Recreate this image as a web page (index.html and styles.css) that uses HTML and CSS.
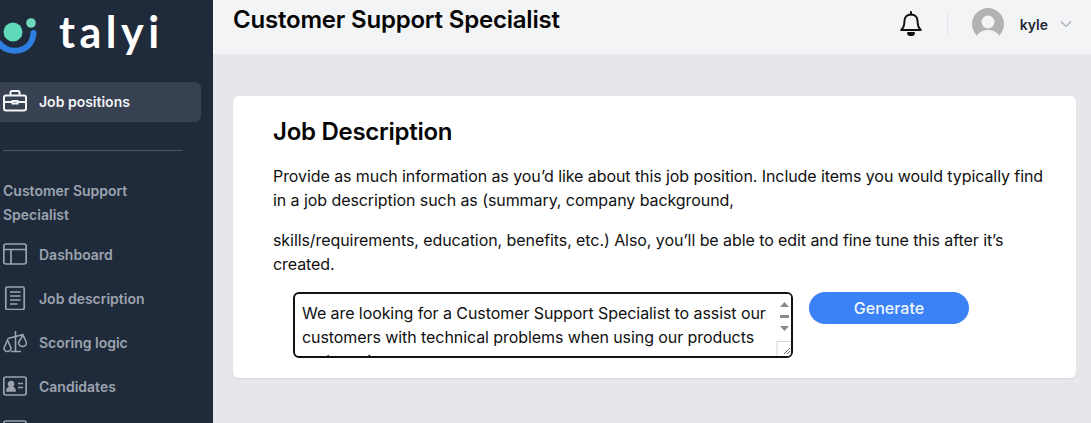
FILE: index.html
```html
<!DOCTYPE html>
<html lang="en">
<head>
<meta charset="utf-8">
<title>Job Description</title>
<link rel="stylesheet" href="styles.css">
</head>
<body>
<div class="app">
  <aside class="sidebar">
    <div class="brand">
      <svg class="logo" width="40" height="52" viewBox="0 0 40 52" fill="none">
        <circle cx="13" cy="27" r="9.500" fill="#5fd9b8"/>
        <circle cx="31" cy="18" r="4.800" fill="#6fd8bd"/>
        <path d="M-1 38C7 50 32 49 33.500 28" stroke="#2f7fe3" stroke-width="6" stroke-linecap="round"/>
      </svg>
      <span class="wordmark">talyi</span>
    </div>
    <a class="nav-item active">
      <svg class="nav-icon" viewBox="0 0 24 24" fill="none" stroke="currentColor" stroke-width="2"><rect x="1" y="6.500" width="22" height="15" rx="2"/><path d="M7.500 6.500V3.500a1.500 1.500 0 0 1 1.500-1.500h6a1.500 1.500 0 0 1 1.500 1.500v3M1 13h8.500M14.500 13H23M9.500 12h5v2.500h-5z"/></svg>
      <span>Job positions</span>
    </a>
    <hr class="divider">
    <div class="section-title">Customer Support Specialist</div>
    <nav class="nav">
      <a class="nav-item">
        <svg class="nav-icon" viewBox="0 0 24 24" fill="none" stroke="currentColor" stroke-width="1.700"><rect x="0.800" y="2" width="22.400" height="20" rx="2"/><path d="M1 7.500h22M8 7.500v14.500"/></svg>
        <span>Dashboard</span>
      </a>
      <a class="nav-item">
        <svg class="nav-icon" viewBox="0 0 24 24" fill="none" stroke="currentColor" stroke-width="1.700"><rect x="2.800" y="1" width="18.400" height="22.500" rx="1.500"/><path d="M7 6h10.500M7 10h10.500M7 14h10.500M7 18h7.500"/></svg>
        <span>Job description</span>
      </a>
      <a class="nav-item">
        <svg class="nav-icon" viewBox="0 0 24 24" fill="none" stroke="currentColor" stroke-width="1.600"><path d="M12.500 1v20M8 21.500h10M5 8.500 20 4.500M1 18l3.500-8 3.500 8a3.500 3.500 0 0 1-7 0zM15.500 12.500l4.500-7.500 3.500 7.500a4 4 0 0 1-8 0z"/></svg>
        <span>Scoring logic</span>
      </a>
      <a class="nav-item">
        <svg class="nav-icon" viewBox="0 0 24 24" fill="none" stroke="currentColor" stroke-width="1.700"><rect x="0.800" y="3" width="22.400" height="18" rx="2"/><circle cx="8" cy="10" r="2.500" fill="currentColor"/><path d="M4 17c0-5 8-5 8 0z" fill="currentColor"/><path d="M15 9.500h5M15 13.500h5"/></svg>
        <span>Candidates</span>
      </a>
      <a class="nav-item">
        <svg class="nav-icon" viewBox="0 0 24 24" fill="none" stroke="currentColor" stroke-width="1.700"><rect x="0.800" y="3" width="22.400" height="18" rx="2"/></svg>
      </a>
    </nav>
  </aside>
  <div class="content">
    <header class="topbar">
      <h1 class="page-title">Customer Support Specialist</h1>
      <div class="top-actions">
        <svg class="bell" width="24" height="26" viewBox="0 0 24 26" fill="none" stroke="#111" stroke-width="2" stroke-linejoin="round"><path d="M12 3.500c-4.200 0-6.600 3-6.600 7 0 4.500-1 6.500-3.200 8.500h19.600c-2.200-2-3.200-4-3.200-8.500 0-4-2.400-7-6.600-7z"/><path d="M12 1v2.500" stroke-linecap="round"/><path d="M9 22h6c-.5 2.800-5.500 2.800-6 0z" fill="#111"/></svg>
        <span class="sep"></span>
        <svg class="avatar" width="32" height="32" viewBox="0 0 32 32"><circle cx="16" cy="16" r="16" fill="#b3b3b3"/><circle cx="16" cy="14" r="6.500" fill="#f3f4f6"/><path d="M5 28c3-8 19-8 22 0a16 16 0 0 1-22 0z" fill="#f3f4f6"/></svg>
        <span class="user-name">kyle</span>
        <svg class="chev" width="12" height="8" viewBox="0 0 12 8" fill="none" stroke="#a9adb3" stroke-width="1.200"><path d="M1 1.500l5 5 5-5"/></svg>
      </div>
    </header>
    <main class="main">
      <section class="card">
        <h2 class="card-title">Job Description</h2>
        <p class="copy first">Provide as much information as you’d like about this job position. Include items you would typically find in a job description such as (summary, company background,</p>
        <p class="copy">skills/requirements, education, benefits, etc.) Also, you’ll be able to edit and fine tune this after it’s created.</p>
        <div class="form-row">
          <div class="textbox">
            <div class="textbox-text">We are looking for a Customer Support Specialist to assist our customers with technical problems when using our products and services.</div>
            <svg class="scrollbar" width="15" height="62" viewBox="0 0 15 62"><path d="M8.500 8l4.500 5h-9z" fill="#8a8a8a"/><rect x="4" y="21" width="9" height="3" fill="#8a8a8a"/><path d="M4 32h9l-4.500 5z" fill="#8a8a8a"/><path d="M1 62V47.500h14" fill="none" stroke="#d5d5d5"/><path d="M8 60l6-6M11 60l3-3" stroke="#666" stroke-width="1"/></svg>
          </div>
          <button class="generate">Generate</button>
        </div>
      </section>
    </main>
  </div>
</div>
</body>
</html>
```
FILE: styles.css
```css
* { box-sizing: border-box; }
html, body { margin: 0; height: 100%; overflow: hidden; }
body { font-family: Inter, "Liberation Sans", sans-serif; color: #111; background: #e5e7eb; }
.app { display: flex; width: 1091px; height: 423px; overflow: hidden; }
.sidebar { flex: 0 0 213px; background: #1f2a3a; color: #9ca3af; overflow: hidden; }
.brand { display: flex; align-items: center; height: 82px; padding-bottom: 20px; }
.logo { flex: none; overflow: visible; }
.wordmark { margin-left: 19px; font-family: Lato, sans-serif; font-size: 43px; font-weight: 700; letter-spacing: 4.500px; color: #fff; line-height: 1; }
.nav-item { display: flex; align-items: center; gap: 12px; height: 40px; width: 201px; padding: 0 0 2px 3px; font-size: 14px; font-weight: 600; color: #9ca3af; }
.nav-item.active { background: #374151; color: #f3f4f6; border-radius: 0 6px 6px 0; }
.nav-icon { width: 24px; height: 24px; flex: none; }
.divider { width: 180px; margin: 28px 0 28px 3px; border: 0; border-top: 1px solid #4b5563; }
.section-title { width: 170px; padding-left: 3px; font-size: 14px; line-height: 24px; font-weight: 600; color: #9ca3af; }
.nav { display: flex; flex-direction: column; gap: 4px; margin-top: 8px; }
.content { flex: 1; display: flex; flex-direction: column; min-width: 0; }
.topbar { flex: 0 0 55px; display: flex; justify-content: space-between; align-items: flex-start; padding: 0 19px 0 20px; background: #f3f4f6; border-bottom: 1px solid #eceef0; }
.page-title { margin: 4px 0 0; font-size: 24px; line-height: 32px; font-weight: 600; letter-spacing: -0.2px; color: #050505; }
.top-actions { display: flex; align-items: center; height: 48px; }
.bell { flex: none; margin-right: 24px; }
.sep { width: 1px; height: 24px; background: #e5e7eb; margin-right: 24px; }
.avatar { flex: none; margin-right: 16px; }
.user-name { font-size: 14px; font-weight: 600; color: #1f2937; margin-right: 12px; }
.chev { flex: none; }
.main { flex: 1; padding: 41px 15px 0 20px; background: #e5e7eb; }
.card { height: 282px; padding: 20px 32px 0 40px; background: #fff; border-radius: 6px; box-shadow: 0 1px 2px rgba(0,0,0,.06); }
.card-title { margin: 0 0 16px; font-size: 24px; line-height: 32px; font-weight: 600; letter-spacing: -0.27px; color: #050505; }
.copy { margin: 0 0 16px; font-size: 16px; line-height: 24px; letter-spacing: -0.075px; color: #111; }
.form-row { display: flex; align-items: flex-start; gap: 16px; margin: 0 0 0 20px; }
.textbox { position: relative; width: 500px; height: 66px; padding: 7px 20px 0 7px; border: 2px solid #111; border-radius: 6px; background: #fff; overflow: hidden; }
.textbox-text { font-size: 16px; line-height: 24px; letter-spacing: -0.075px; color: #111; }
.scrollbar { position: absolute; right: 0; top: 0; background: #fff; }
.generate { width: 160px; height: 32px; border: 0; border-radius: 16px; background: #3b82f6; color: #eff6ff; font: 500 16px Inter, sans-serif; }
```
